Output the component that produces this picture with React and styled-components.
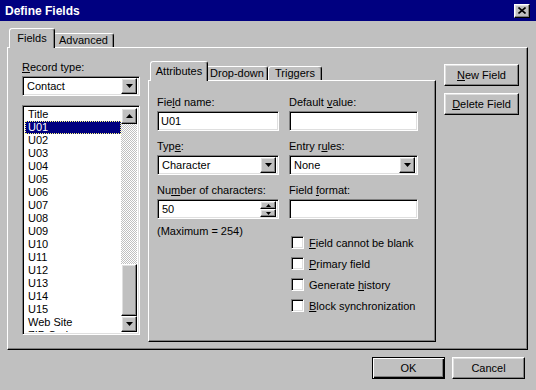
import styled, { createGlobalStyle, css } from "styled-components";

const GlobalStyle = createGlobalStyle`
  * { box-sizing: border-box; }
  body {
    margin: 0;
    background: #c0c0c0;
    font-family: "Liberation Sans", Arial, sans-serif;
    font-size: 11px;
    color: #000;
  }
`;

const raised = css`
  border: 1px solid;
  border-color: #fff #000 #000 #fff;
  box-shadow: inset -1px -1px #808080, inset 1px 1px #dfdfdf;
  background: #c0c0c0;
`;

const sunken = css`
  border: 1px solid;
  border-color: #808080 #fff #fff #808080;
  box-shadow: inset 1px 1px #000, inset -1px -1px #dfdfdf;
  background: #fff;
`;

const records = [
  "Title",
  "U01", "U02", "U03", "U04", "U05", "U06", "U07", "U08",
  "U09", "U10", "U11", "U12", "U13", "U14", "U15",
  "Web Site", "ZIP Code",
];

const Arrow = ({ down = true, small = false }) => {
  const w = small ? 5 : 7;
  const h = small ? 3 : 4;
  const pts = down ? `0,0 ${w},0 ${w / 2},${h}` : `0,${h} ${w},${h} ${w / 2},0`;
  return (
    <svg width={w} height={h} viewBox={`0 0 ${w} ${h}`}>
      <polygon points={pts} fill="#000" />
    </svg>
  );
};

const CloseGlyph = () => (
  <svg width="8" height="7" viewBox="0 0 8 7">
    <path d="M0.5 0.5 L7.5 6.5 M7.5 0.5 L0.5 6.5" stroke="#000" strokeWidth="1.6" />
  </svg>
);

const ComboBox = ({ value }) => (
  <S.Combo>
    <S.ComboText>{value}</S.ComboText>
    <S.DropButton>
      <Arrow />
    </S.DropButton>
  </S.Combo>
);

const CheckOption = ({ children }) => (
  <S.CheckRow>
    <S.CheckBox />
    <span>{children}</span>
  </S.CheckRow>
);

export default function App() {
  return (
    <>
      <GlobalStyle />
      <S.Window>
        <S.TitleBar>
          <span>Define Fields</span>
          <S.CloseButton>
            <CloseGlyph />
          </S.CloseButton>
        </S.TitleBar>

        <S.Body>
          <S.TabStrip $pad={4}>
            <S.Tab $active $w={42}>Fields</S.Tab>
            <S.Tab $w={61}>Advanced</S.Tab>
          </S.TabStrip>

          <S.OuterPanel>
            <S.LeftColumn>
              <S.Label>
                <u>R</u>ecord type:
              </S.Label>
              <ComboBox value="Contact" />
              <S.ListBox>
                <S.Items>
                  {records.map((r) => (
                    <S.Item key={r} $selected={r === "U01"}>
                      {r}
                    </S.Item>
                  ))}
                </S.Items>
                <S.ScrollBar>
                  <S.ScrollButton>
                    <Arrow down={false} />
                  </S.ScrollButton>
                  <S.Track />
                  <S.Thumb />
                  <S.ScrollButton>
                    <Arrow />
                  </S.ScrollButton>
                </S.ScrollBar>
              </S.ListBox>
            </S.LeftColumn>

            <S.InnerArea>
              <S.TabStrip $pad={4}>
                <S.Tab $active $w={54}>Attributes</S.Tab>
                <S.Tab $w={62}>Drop-down</S.Tab>
                <S.Tab $w={54}>Triggers</S.Tab>
              </S.TabStrip>
              <S.InnerPanel>
                <S.FieldColumn $w={122}>
                  <S.Field>
                    <S.Label>
                      Fie<u>l</u>d name:
                    </S.Label>
                    <S.TextBox>U01</S.TextBox>
                  </S.Field>
                  <S.Field>
                    <S.Label>
                      Typ<u>e</u>:
                    </S.Label>
                    <ComboBox value="Character" />
                  </S.Field>
                  <S.Field>
                    <S.Label>
                      Nu<u>m</u>ber of characters:
                    </S.Label>
                    <S.Combo>
                      <S.ComboText>50</S.ComboText>
                      <S.SpinButtons>
                        <S.SpinButton>
                          <Arrow down={false} small />
                        </S.SpinButton>
                        <S.SpinButton>
                          <Arrow small />
                        </S.SpinButton>
                      </S.SpinButtons>
                    </S.Combo>
                  </S.Field>
                  <S.Note>(Maximum = 254)</S.Note>
                </S.FieldColumn>

                <S.FieldColumn $w={129}>
                  <S.Field>
                    <S.Label>
                      Default <u>v</u>alue:
                    </S.Label>
                    <S.TextBox />
                  </S.Field>
                  <S.Field>
                    <S.Label>
                      Entry r<u>u</u>les:
                    </S.Label>
                    <ComboBox value="None" />
                  </S.Field>
                  <S.Field>
                    <S.Label>
                      Field <u>f</u>ormat:
                    </S.Label>
                    <S.TextBox />
                  </S.Field>
                  <S.CheckList>
                    <CheckOption>
                      <u>F</u>ield cannot be blank
                    </CheckOption>
                    <CheckOption>
                      <u>P</u>rimary field
                    </CheckOption>
                    <CheckOption>
                      Generate <u>h</u>istory
                    </CheckOption>
                    <CheckOption>
                      <u>B</u>lock synchronization
                    </CheckOption>
                  </S.CheckList>
                </S.FieldColumn>
              </S.InnerPanel>
            </S.InnerArea>

            <S.SideButtons>
              <S.Button>
                <u>N</u>ew Field
              </S.Button>
              <S.Button>
                <u>D</u>elete Field
              </S.Button>
            </S.SideButtons>
          </S.OuterPanel>

          <S.Footer>
            <S.Button $default $w={73}>OK</S.Button>
            <S.Button $w={73}>Cancel</S.Button>
          </S.Footer>
        </S.Body>
      </S.Window>
    </>
  );
}

const Window = styled.div`
  width: 536px;
  height: 390px;
  background: #c0c0c0;
  display: flex;
  flex-direction: column;
  overflow: hidden;
`;

const TitleBar = styled.div`
  height: 21px;
  background: #000080;
  color: #fff;
  font-weight: bold;
  font-size: 12px;
  display: flex;
  align-items: center;
  justify-content: space-between;
  padding: 0 6px 0 5px;
`;

const CloseButton = styled.div`
  ${raised};
  width: 16px;
  height: 14px;
  display: flex;
  align-items: center;
  justify-content: center;
`;

const Body = styled.div`
  flex: 1;
  padding: 7px 8px 0 7px;
  display: flex;
  flex-direction: column;
`;

const TabStrip = styled.div`
  height: 19px;
  display: flex;
  align-items: flex-end;
  padding-left: ${({ $pad }) => $pad}px;
`;

const Tab = styled.div`
  width: ${({ $w, $active }) => $w + ($active ? 4 : 0)}px;
  height: ${({ $active }) => ($active ? 20 : 14)}px;
  margin: ${({ $active }) => ($active ? "0 -2px -1px" : "0")};
  position: relative;
  z-index: ${({ $active }) => ($active ? 2 : 1)};
  background: #c0c0c0;
  border: 1px solid;
  border-bottom: none;
  border-color: #fff #000 transparent #fff;
  border-radius: 3px 3px 0 0;
  box-shadow: inset -1px 0 #808080;
  display: flex;
  justify-content: center;
  padding-top: ${({ $active }) => ($active ? 3 : 0)}px;
  line-height: 12px;
  white-space: nowrap;
`;

const OuterPanel = styled.div`
  height: 303px;
  border: 1px solid;
  border-color: #fff #000 #000 #fff;
  box-shadow: inset -1px -1px #808080;
  display: flex;
  gap: 8px;
  padding: 12px 8px 0 14px;
`;

const LeftColumn = styled.div`
  width: 118px;
  display: flex;
  flex-direction: column;
`;

const Label = styled.div`
  line-height: 14px;
  height: 14px;
  margin-bottom: 2px;
  white-space: nowrap;
`;

const Combo = styled.div`
  ${sunken};
  height: 20px;
  display: flex;
  align-items: center;
  padding: 2px;
`;

const ComboText = styled.div`
  flex: 1;
  padding-left: 2px;
  line-height: 14px;
`;

const DropButton = styled.div`
  ${raised};
  width: 16px;
  height: 16px;
  display: flex;
  align-items: center;
  justify-content: center;
`;

const ListBox = styled.div`
  ${sunken};
  margin-top: 9px;
  height: 230px;
  display: flex;
  padding: 2px;
  overflow: hidden;
`;

const Items = styled.div`
  flex: 1;
  overflow: hidden;
`;

const Item = styled.div`
  height: 13px;
  line-height: 13px;
  padding-left: 3px;
  white-space: nowrap;
  background: ${({ $selected }) => ($selected ? "#000080" : "transparent")};
  color: ${({ $selected }) => ($selected ? "#fff" : "#000")};
  outline: ${({ $selected }) => ($selected ? "1px dotted #ffff80" : "none")};
  outline-offset: -1px;
`;

const ScrollBar = styled.div`
  width: 16px;
  display: flex;
  flex-direction: column;
`;

const ScrollButton = styled.div`
  ${raised};
  height: 16px;
  flex-shrink: 0;
  display: flex;
  align-items: center;
  justify-content: center;
`;

const Track = styled.div`
  flex: 1;
  background-color: #fff;
  background-image: repeating-conic-gradient(#c0c0c0 0 25%, #fff 0 50%);
  background-size: 2px 2px;
`;

const Thumb = styled.div`
  ${raised};
  height: 52px;
  flex-shrink: 0;
`;

const InnerArea = styled.div`
  width: 288px;
  display: flex;
  flex-direction: column;
  padding-top: 1px;
`;

const InnerPanel = styled.div`
  height: 262px;
  border: 1px solid;
  border-color: #fff #000 #000 #fff;
  box-shadow: inset -1px -1px #808080;
  display: flex;
  gap: 10px;
  padding: 14px 0 0 8px;
`;

const FieldColumn = styled.div`
  width: ${({ $w }) => $w}px;
  display: flex;
  flex-direction: column;
  gap: 8px;
`;

const Field = styled.div`
  display: flex;
  flex-direction: column;
`;

const TextBox = styled.div`
  ${sunken};
  height: 20px;
  padding: 2px 0 0 3px;
  line-height: 15px;
`;

const SpinButtons = styled.div`
  display: flex;
  flex-direction: column;
`;

const SpinButton = styled.div`
  ${raised};
  width: 16px;
  height: 8px;
  display: flex;
  align-items: center;
  justify-content: center;
`;

const Note = styled.div`
  margin-top: -3px;
  line-height: 14px;
`;

const CheckList = styled.div`
  margin-top: 5px;
  display: flex;
  flex-direction: column;
  padding-left: 2px;
`;

const CheckRow = styled.div`
  height: 21px;
  display: flex;
  align-items: center;
  gap: 5px;
  white-space: nowrap;
`;

const CheckBox = styled.div`
  ${sunken};
  width: 13px;
  height: 13px;
  flex-shrink: 0;
`;

const SideButtons = styled.div`
  width: 75px;
  padding-top: 4px;
  display: flex;
  flex-direction: column;
  gap: 7px;
`;

const Button = styled.div`
  ${raised};
  width: ${({ $w }) => ($w ? `${$w}px` : "100%")};
  height: 22px;
  display: flex;
  align-items: center;
  justify-content: center;
  white-space: nowrap;
  ${({ $default }) =>
    $default &&
    css`
      border: 1px solid #000;
      box-shadow: inset 1px 1px #fff, inset -1px -1px #000, inset -2px -2px #808080;
    `}
`;

const Footer = styled.div`
  margin-top: 7px;
  display: flex;
  justify-content: flex-end;
  gap: 7px;
  padding-right: 3px;
`;

const S = {
  Window,
  TitleBar,
  CloseButton,
  Body,
  TabStrip,
  Tab,
  OuterPanel,
  LeftColumn,
  Label,
  Combo,
  ComboText,
  DropButton,
  ListBox,
  Items,
  Item,
  ScrollBar,
  ScrollButton,
  Track,
  Thumb,
  InnerArea,
  InnerPanel,
  FieldColumn,
  Field,
  TextBox,
  SpinButtons,
  SpinButton,
  Note,
  CheckList,
  CheckRow,
  CheckBox,
  SideButtons,
  Button,
  Footer,
};
